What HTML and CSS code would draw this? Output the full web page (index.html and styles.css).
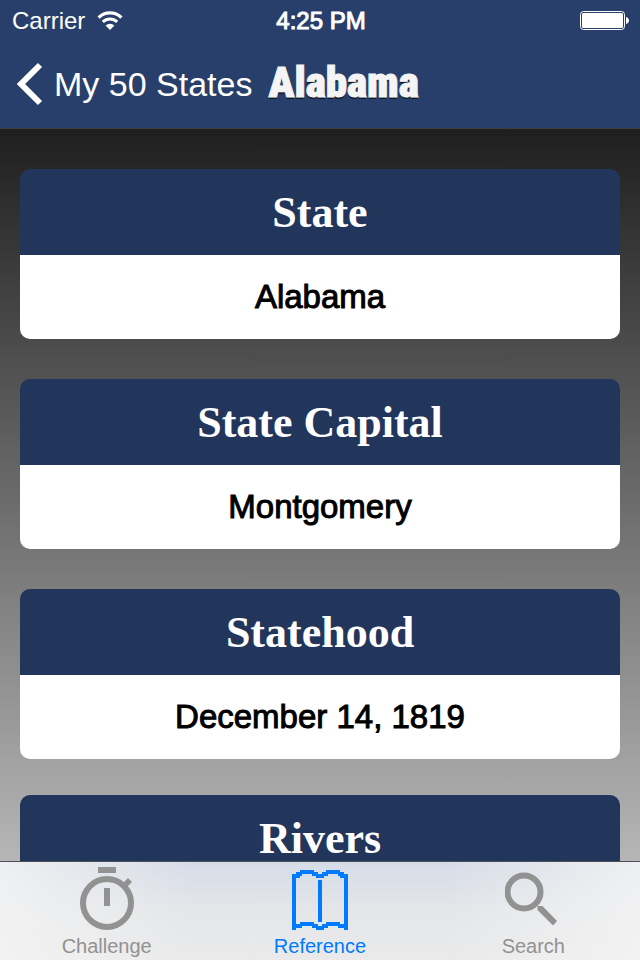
FILE: index.html
```html
<!DOCTYPE html>
<html lang="en">
<head>
<meta charset="utf-8">
<meta name="viewport" content="width=device-width, initial-scale=1">
<title>Alabama</title>
<link rel="stylesheet" href="styles.css">
</head>
<body>
<header class="topbar">
  <div class="status">
    <div class="status-left">
      <span>Carrier</span>
      <svg class="wifi" width="26" height="20" viewBox="0 0 26 20" aria-hidden="true">
        <path d="M1.600 6.600A16.200 16.200 0 0 1 24.400 6.600" fill="none" stroke="#fff" stroke-width="3.400"/>
        <path d="M5.800 10.900A10.200 10.200 0 0 1 20.200 10.900" fill="none" stroke="#fff" stroke-width="3"/>
        <path d="M13 19L8.600 14.600A6.200 6.200 0 0 1 17.400 14.600Z" fill="#fff"/>
      </svg>
    </div>
    <span class="time">4:25 PM</span>
    <div class="status-right">
      <svg width="50" height="20" viewBox="0 0 50 20" aria-hidden="true">
        <rect x="0.500" y="0.500" width="44" height="18" rx="3" fill="none" stroke="#fff"/>
        <rect x="2" y="2" width="41" height="15" rx="1.500" fill="#fff"/>
        <path d="M46 6c4 1 4 6 0 7z" fill="#fff"/>
      </svg>
    </div>
  </div>
  <nav class="navbar">
    <a class="back" href="#states">
      <svg width="28" height="44" viewBox="0 0 28 44" aria-hidden="true"><polyline points="24,3 5,22 24,41" fill="none" stroke="#fff" stroke-width="6"/></svg>
      <span>My 50 States</span>
    </a>
    <h1 class="title">Alabama</h1>
  </nav>
</header>
<main class="content">
  <section class="card">
    <h2>State</h2>
    <p>Alabama</p>
  </section>
  <section class="card">
    <h2>State Capital</h2>
    <p>Montgomery</p>
  </section>
  <section class="card">
    <h2>Statehood</h2>
    <p>December 14, 1819</p>
  </section>
  <section class="card card-long">
    <h2>Rivers</h2>
  </section>
</main>
<nav class="tabs">
  <a class="tab" href="#challenge">
    <svg width="56" height="64" viewBox="0 0 56 64" aria-hidden="true">
      <circle cx="28" cy="37" r="24" fill="none" stroke="#929292" stroke-width="6"/>
      <path d="M19 1h18v6H19zM25 22h6v18h-6zM43 18l6-6 4 4-6 6z" fill="#929292"/>
    </svg>
    <span>Challenge</span>
  </a>
  <a class="tab active" href="#reference">
    <svg width="56" height="64" viewBox="0 0 56 64" shape-rendering="crispEdges" aria-hidden="true">
      <g fill="#007aff">
        <path d="M0 8h4v56H0zM52 8h4v56h-4zM26 14h4v42h-4z"/>
        <path d="M2 8h6v4H2zM4 6h6v4H4zM8 4h14v4H8zM20 6h6v4h-6zM24 8h8v4h-8zM30 6h6v4h-6zM34 4h14v4H34zM46 6h6v4h-6zM48 8h6v4h-6z"/>
        <path d="M0 58h10v4H0zM8 56h14v4H8zM20 58h6v4h-6zM24 60h8v4h-8zM30 58h6v4h-6zM34 56h14v4H34zM46 58h10v4H46z"/>
      </g>
    </svg>
    <span>Reference</span>
  </a>
  <a class="tab" href="#search">
    <svg width="56" height="64" viewBox="0 0 56 64" aria-hidden="true">
      <circle cx="19" cy="26" r="16.500" fill="none" stroke="#929292" stroke-width="6"/>
      <path d="M32.500 44v-4h5L52 55l-4 4.500z" fill="#929292"/>
    </svg>
    <span>Search</span>
  </a>
</nav>
</body>
</html>
```

FILE: styles.css
```css
* { box-sizing: border-box; margin: 0; padding: 0; }

body {
  display: flex;
  flex-direction: column;
  height: 100vh;
  overflow: hidden;
  font-family: "Liberation Sans", Arial, sans-serif;
  background: #b4b4b4;
}

a { color: inherit; text-decoration: none; }

.topbar {
  flex: none;
  background: #273f6a;
  color: #fff;
  border-bottom: 1px solid #3f3f3f;
}

.status {
  display: grid;
  grid-template-columns: 1fr auto 1fr;
  align-items: center;
  height: 40px;
  padding: 2px 10px 0 12px;
  font-size: 24px;
}

.status-left { display: flex; align-items: center; gap: 12px; }
.status-right { display: flex; justify-content: flex-end; }
.time { -webkit-text-stroke: 1px #fff; }

.navbar {
  display: flex;
  align-items: center;
  gap: 16px;
  height: 88px;
  padding: 0 16px;
}

.back {
  display: flex;
  align-items: center;
  gap: 10px;
  font-size: 34px;
}

.title {
  padding-bottom: 4px;
  font-family: "Roboto Condensed", Roboto, sans-serif;
  font-size: 43px;
  line-height: 48px;
  font-weight: 900;
  color: #f4f4f4;
  -webkit-text-stroke: 1px #f4f4f4;
  text-shadow: 0 2px 0 #101820;
}

.content {
  flex: 1;
  min-height: 0;
  overflow: hidden;
  padding: 40px 20px 0;
  background: linear-gradient(#1f1f1f, #b6b6b6);
}

.card {
  margin-bottom: 40px;
  border-radius: 10px;
  overflow: hidden;
  text-align: center;
}

.card h2 {
  padding: 22px 20px 20px;
  font-family: "Liberation Serif", "Times New Roman", serif;
  font-size: 44px;
  line-height: 44px;
  color: #fff;
  background: #22355b;
}

.card p {
  padding: 22px 20px;
  font-size: 33px;
  line-height: 40px;
  color: #000;
  background: #fff;
  -webkit-text-stroke: 1px #000;
}

.card-long { margin-top: -4px; }

.tabs {
  flex: none;
  display: grid;
  grid-template-columns: repeat(3, 1fr);
  height: 99px;
  border-top: 1px solid #4b5058;
  background:
    linear-gradient(90deg, rgba(244, 244, 244, 0.8), rgba(244, 244, 244, 0) 30%, rgba(244, 244, 244, 0) 70%, rgba(244, 244, 244, 0.8)),
    linear-gradient(#d6dce7, #e4e6e9 50%, #eaeaea);
}

.tab {
  display: flex;
  flex-direction: column;
  align-items: center;
  gap: 4px;
  padding-top: 4px;
  font-size: 20px;
  line-height: 24px;
  color: #929292;
}

.active { color: #007aff; }
```
